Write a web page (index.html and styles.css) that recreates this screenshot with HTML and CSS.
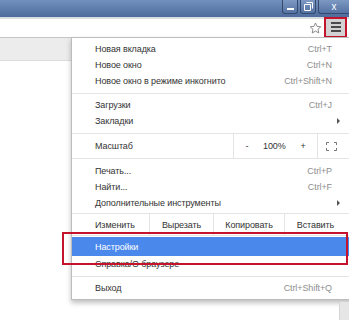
FILE: index.html
```html
<!DOCTYPE html>
<html lang="ru">
<head>
    <meta charset="UTF-8">
    <title>Меню</title>
    <link rel="stylesheet" href="styles.css">
</head>
<body>
    <div id="window">
        <div class="titlebar">
            <div class="win-btns">
                <div class="win-btn min"><span class="min-bar"></span></div>
                <div class="win-btn restore">
                    <svg width="9" height="9" viewBox="0 0 9 9"><path d="M2.5 0.5h6v6M0.5 2.5h6v6h-6z" fill="none" stroke="#fff" stroke-width="1"/></svg>
                </div>
                <div class="win-btn close">x</div>
            </div>
        </div>
        <div class="toolbar">
            <div class="omnibox"></div>
            <svg class="star" width="13" height="13" viewBox="0 0 13 13"><path d="M6.5 1l1.6 3.4 3.7.4-2.8 2.5.8 3.7-3.3-1.9-3.3 1.9.8-3.7L1.2 4.8l3.7-.4z" fill="none" stroke="#8a8a8a" stroke-width="1"/></svg>
            <div class="menu-btn">
                <span></span><span></span><span></span>
            </div>
        </div>
        <div class="page">
            <div class="infobar"></div>
        </div>

        <div class="menu">
            <div class="item"><span>Новая вкладка</span><span class="key">Ctrl+T</span></div>
            <div class="item"><span>Новое окно</span><span class="key">Ctrl+N</span></div>
            <div class="item"><span>Новое окно в режиме инкогнито</span><span class="key">Ctrl+Shift+N</span></div>
            <div class="sep"></div>
            <div class="item"><span>Загрузки</span><span class="key">Ctrl+J</span></div>
            <div class="item"><span>Закладки</span><span class="arrow"></span></div>
            <div class="sep last"></div>
            <div class="row zoom-row">
                <div class="cell label">Масштаб</div>
                <div class="cell zoom-ctl"><span>-</span><span>100%</span><span>+</span></div>
                <div class="cell full">
                    <svg width="11" height="9" viewBox="0 0 11 9"><path d="M0.5 3V0.5H3M8 0.5h2.5V3M10.5 6v2.5H8M3 8.5H0.5V6" fill="none" stroke="#777" stroke-width="1"/></svg>
                </div>
            </div>
            <div class="gap"></div>
            <div class="item"><span>Печать...</span><span class="key">Ctrl+P</span></div>
            <div class="item"><span>Найти...</span><span class="key">Ctrl+F</span></div>
            <div class="item"><span>Дополнительные инструменты</span><span class="arrow"></span></div>
            <div class="row edit-row">
                <div class="cell label">Изменить</div>
                <div class="cell">Вырезать</div>
                <div class="cell">Копировать</div>
                <div class="cell">Вставить</div>
            </div>
            <div class="item active"><span>Настройки</span></div>
            <div class="item"><span>Справка/О браузере</span></div>
            <div class="sep"></div>
            <div class="item"><span>Выход</span><span class="key">Ctrl+Shift+Q</span></div>
        </div>

        <div class="mark"></div>
        <div class="scrollbar"></div>
    </div>
</body>
</html>
```

FILE: styles.css
```css
* {
    margin: 0;
    padding: 0;
    box-sizing: border-box;
}

body {
    width: 349px;
    height: 320px;
    overflow: hidden;
    background: #fff;
    font-family: 'Liberation Sans', Arial, sans-serif;
    font-size: 9px;
    letter-spacing: -0.1px;
    color: #333;
}

#window {
    position: relative;
    width: 349px;
    height: 320px;
    overflow: hidden;
}

.titlebar {
    height: 17px;
    background: linear-gradient(#7391bd, #4d6b9b);
    display: flex;
    justify-content: flex-end;
}

.win-btns {
    display: flex;
    gap: 2px;
    height: 14px;
}

.win-btn {
    width: 16px;
    height: 14px;
    background: linear-gradient(#7d99c3, #5573a3);
    border: 1px solid #34496d;
    border-top: none;
    border-radius: 0 0 3px 3px;
    display: flex;
    align-items: center;
    justify-content: center;
    color: #fff;
    font-size: 10px;
}

.win-btn.close {
    width: 31px;
    border-radius: 0 0 0 3px;
    border-right: none;
}

.min-bar {
    width: 7px;
    height: 2px;
    background: #fff;
    margin-top: 4px;
}

.toolbar {
    height: 21px;
    border-top: 2px solid #d9dde3;
    border-bottom: 1px solid #c6c6c6;
    display: flex;
    align-items: center;
}

.omnibox {
    flex: 1;
}

.star {
    margin-right: 2px;
}

.menu-btn {
    width: 23px;
    height: 21px;
    margin-top: -2px;
    margin-right: 2px;
    background: #d2d2d2;
    border: 2px solid #c4142c;
    display: flex;
    flex-direction: column;
    justify-content: center;
    align-items: center;
    gap: 2px;
}

.menu-btn span {
    width: 10px;
    height: 2px;
    background: #4a4a4a;
}

.page {
    height: 282px;
}

.infobar {
    height: 23px;
    background: #ececec;
    border-bottom: 1px solid #dcdcdc;
}

.menu {
    position: absolute;
    left: 71px;
    top: 37px;
    width: 284px;
    background: #fff;
    border: 1px solid #bcbcbc;
    box-shadow: 0 3px 5px rgba(0, 0, 0, 0.25);
    padding: 3px 0 3px;
    display: flex;
    flex-direction: column;
}

.item {
    height: 16px;
    display: flex;
    align-items: center;
    justify-content: space-between;
    padding: 0 22px 0 23px;
}

.key {
    color: #8e8e8e;
}

.arrow {
    width: 0;
    height: 0;
    border-left: 3px solid #555;
    border-top: 3px solid transparent;
    border-bottom: 3px solid transparent;
    margin-right: -8px;
}

.sep {
    height: 1px;
    background: #e4e4e4;
    margin: 4px 0 3px;
}

.sep.last {
    margin-bottom: 0;
}

.gap {
    height: 4px;
}

.row {
    display: flex;
    border-top: 1px solid #e4e4e4;
    border-bottom: 1px solid #e4e4e4;
}

.cell {
    display: flex;
    align-items: center;
    justify-content: center;
    border-left: 1px solid #e4e4e4;
}

.cell.label {
    justify-content: flex-start;
    padding-left: 23px;
    border-left: none;
}

.zoom-row {
    height: 25px;
    border-top: none;
}

.zoom-row .label {
    width: 161px;
}

.zoom-ctl {
    width: 84px;
    justify-content: space-around;
    padding: 0 4px;
}

.full {
    width: 28px;
}

.edit-row {
    height: 23px;
    margin-top: 2px;
}

.edit-row .label {
    width: 77px;
}

.edit-row .cell:nth-child(2) {
    width: 64px;
}

.edit-row .cell:nth-child(3) {
    width: 71px;
}

.edit-row .cell:nth-child(4) {
    width: 62px;
}

.item.active {
    height: 19px;
    margin-top: 1px;
    background: #4a88ec;
    color: #fff;
}

.mark {
    position: absolute;
    left: 62px;
    top: 232px;
    width: 286px;
    height: 33px;
    border: 2px solid #c4142c;
}

.scrollbar {
    position: absolute;
    right: 0;
    top: 302px;
    width: 10px;
    height: 18px;
    background: #e6e6e6;
    border-left: 1px solid #d6d6d6;
}
```
